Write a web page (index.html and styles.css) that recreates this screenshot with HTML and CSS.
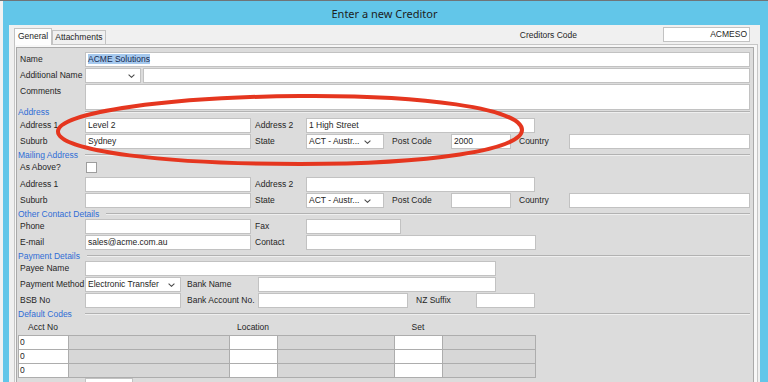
FILE: index.html
```html
<!DOCTYPE html>
<html lang="en">
<head>
    <meta charset="UTF-8">
    <meta name="viewport" content="width=device-width, initial-scale=1.0">
    <title>Enter a new Creditor</title>
    <link rel="stylesheet" href="styles.css">
</head>
<body>
    <div class="screen">
        <div class="behind"></div>
        <div class="window">
            <div class="titlebar">Enter a new Creditor</div>
            <div class="client">
                <div class="tabbar">
                    <div class="tabs">
                        <div class="tab active">General</div>
                        <div class="tab">Attachments</div>
                    </div>
                    <span class="code-label">Creditors Code</span>
                    <div class="field code">ACMESO</div>
                </div>

                <div class="tabpage">
                    <div class="panel">
                        <div class="row">
                            <span class="label">Name</span>
                            <div class="field wide"><span class="selected">ACME Solutions</span></div>
                        </div>
                        <div class="row">
                            <span class="label">Additional Name</span>
                            <div class="field combo extra"><span></span>
                                <svg class="chevron" viewBox="0 0 7 4"><path d="M0.6 0.6 L3.5 3.3 L6.4 0.6"/></svg>
                            </div>
                            <div class="field rest"></div>
                        </div>
                        <div class="row comments">
                            <span class="label">Comments</span>
                            <div class="field wide notes"></div>
                        </div>

                        <!-- Address -->
                        <div class="section address"><span>Address</span></div>
                        <div class="row">
                            <span class="label">Address 1</span>
                            <div class="field short">Level 2</div>
                            <span class="label2">Address 2</span>
                            <div class="field medium">1 High Street</div>
                        </div>
                        <div class="row">
                            <span class="label">Suburb</span>
                            <div class="field short">Sydney</div>
                            <span class="label2">State</span>
                            <div class="field combo state"><span>ACT - Austr...</span>
                                <svg class="chevron" viewBox="0 0 7 4"><path d="M0.6 0.6 L3.5 3.3 L6.4 0.6"/></svg>
                            </div>
                            <span class="label-post">Post Code</span>
                            <div class="field post">2000</div>
                            <span class="label-country">Country</span>
                            <div class="field country"></div>
                        </div>

                        <!-- Mailing Address -->
                        <div class="section"><span>Mailing Address</span></div>
                        <div class="row check-row">
                            <span class="label">As Above?</span>
                            <div class="checkbox"></div>
                        </div>
                        <div class="row">
                            <span class="label">Address 1</span>
                            <div class="field short"></div>
                            <span class="label2">Address 2</span>
                            <div class="field medium"></div>
                        </div>
                        <div class="row">
                            <span class="label">Suburb</span>
                            <div class="field short"></div>
                            <span class="label2">State</span>
                            <div class="field combo state"><span>ACT - Austr...</span>
                                <svg class="chevron" viewBox="0 0 7 4"><path d="M0.6 0.6 L3.5 3.3 L6.4 0.6"/></svg>
                            </div>
                            <span class="label-post">Post Code</span>
                            <div class="field post"></div>
                            <span class="label-country">Country</span>
                            <div class="field country"></div>
                        </div>

                        <!-- Other Contact Details -->
                        <div class="section"><span>Other Contact Details</span></div>
                        <div class="row">
                            <span class="label">Phone</span>
                            <div class="field short"></div>
                            <span class="label2">Fax</span>
                            <div class="field fax"></div>
                        </div>
                        <div class="row">
                            <span class="label">E-mail</span>
                            <div class="field short">sales@acme.com.au</div>
                            <span class="label2">Contact</span>
                            <div class="field contact"></div>
                        </div>

                        <!-- Payment Details -->
                        <div class="section"><span>Payment Details</span></div>
                        <div class="row">
                            <span class="label">Payee Name</span>
                            <div class="field payee"></div>
                        </div>
                        <div class="row">
                            <span class="label">Payment Method</span>
                            <div class="field combo method"><span>Electronic Transfer</span>
                                <svg class="chevron" viewBox="0 0 7 4"><path d="M0.6 0.6 L3.5 3.3 L6.4 0.6"/></svg>
                            </div>
                            <span class="label-bank">Bank Name</span>
                            <div class="field bank"></div>
                        </div>
                        <div class="row">
                            <span class="label">BSB No</span>
                            <div class="field bsb"></div>
                            <span class="label-bank">Bank Account No.</span>
                            <div class="field account"></div>
                            <span class="label-nz">NZ Suffix</span>
                            <div class="field suffix"></div>
                        </div>

                        <!-- Default Codes -->
                        <div class="section"><span>Default Codes</span></div>
                        <div class="codes">
                            <div class="codes-head">
                                <span>Acct No</span><span></span>
                                <span>Location</span><span></span>
                                <span>Set</span><span></span>
                            </div>
                            <div class="codes-row">
                                <span class="cell">0</span><span class="cell grey"></span>
                                <span class="cell"></span><span class="cell grey"></span>
                                <span class="cell"></span><span class="cell grey"></span>
                            </div>
                            <div class="codes-row">
                                <span class="cell">0</span><span class="cell grey"></span>
                                <span class="cell"></span><span class="cell grey"></span>
                                <span class="cell"></span><span class="cell grey"></span>
                            </div>
                            <div class="codes-row last">
                                <span class="cell">0</span><span class="cell grey"></span>
                                <span class="cell"></span><span class="cell grey"></span>
                                <span class="cell"></span><span class="cell grey"></span>
                            </div>
                        </div>
                        <div class="row">
                            <span class="label"></span>
                            <div class="field tiny"></div>
                        </div>

                        <!-- red hand-drawn ring around the street address -->
                        <svg class="annotation" viewBox="17 48 736 334" width="736" height="334">
                            <path d="M 58 131 C 60 112, 170 97, 300 96 C 420 95, 522 108, 522 130 C 522 150, 430 164, 300 164 C 170 164, 56 152, 58 131 Z"/>
                        </svg>
                    </div>
                </div>
            </div>
        </div>
    </div>
</body>
</html>
```

FILE: styles.css
```css
* {
    box-sizing: border-box;
}
html, body {
    margin: 0;
    padding: 0;
}
body {
    width: 768px;
    height: 382px;
    overflow: hidden;
    font-family: "Liberation Sans", Arial, sans-serif;
    font-size: 8.5px;
    color: #252525;
    background: #eef0f2;
}
.screen {
    display: flex;
    height: 382px;
    border-top: 1px solid #6f7478;
}
.behind {
    width: 3px;
    background: #f1f2f3;
}
.window {
    flex: 1;
    display: flex;
    flex-direction: column;
    min-height: 0;
    background: #62c6e9;
    padding: 0 8px 0 6px;
}
.titlebar {
    flex: none;
    height: 24px;
    display: flex;
    align-items: center;
    justify-content: center;
    font-family: "Noto Sans", "Open Sans", sans-serif;
    font-size: 11px;
    color: #1d1d1d;
}
.client {
    flex: 1;
    min-height: 0;
    overflow: hidden;
    display: flex;
    flex-direction: column;
    background: #f0f0f0;
}

/* tab strip + creditors code */
.tabbar {
    flex: none;
    height: 19px;
    display: flex;
    align-items: flex-end;
    padding: 0 10px 0 5px;
}
.tabs {
    flex: 1;
    display: flex;
    align-items: flex-end;
}
.tab {
    height: 14px;
    padding: 0 2px;
    line-height: 13px;
    border: 1px solid #c3c3c3;
    border-bottom: none;
    background: #f0f0f0;
}
.tab.active {
    height: 17px;
    padding: 0 3px;
    line-height: 15px;
    background: #fdfdfd;
    margin-bottom: -1px;
    position: relative;
    z-index: 1;
}
.code-label {
    align-self: center;
    margin-right: 86px;
}
.field.code {
    align-self: center;
    width: 87px;
    text-align: right;
}

.tabpage {
    flex: none;
    display: flex;
    flex-direction: column;
    margin: 0 2px 0 5px;
    padding: 2px 3px 0 1px;
    border: 1px solid #c6c6c6;
    border-bottom: none;
    background: #f7f7f7;
}
.panel {
    position: relative;
    padding: 4px 3px 0 1px;
    border: 1px solid #a9a9a9;
    border-bottom: none;
    background: #dcdcdc;
}

/* form rows */
.row {
    display: flex;
    align-items: flex-start;
    height: 16px;
}
.label {
    flex: none;
    width: 67px;
    padding-left: 2px;
    line-height: 15px;
    white-space: nowrap;
}
.label2, .label-post, .label-country, .label-bank, .label-nz {
    flex: none;
    line-height: 15px;
    white-space: nowrap;
}
.label2 { width: 55px; padding-left: 4px; }
.label-post { width: 67px; padding-left: 8px; }
.label-country { width: 58px; padding-left: 8px; }
.label-bank { width: 77px; padding-left: 6px; }
.label-nz { width: 68px; padding-left: 8px; }

.field {
    flex: none;
    height: 15px;
    padding: 0 2px;
    line-height: 13px;
    white-space: nowrap;
    overflow: hidden;
    background: #fff;
    border: 1px solid #c2c2c2;
}
.selected {
    background: #a6c9ee;
    color: #14284f;
}
.combo {
    display: flex;
    align-items: center;
    justify-content: space-between;
    padding-right: 5px;
}
.chevron {
    width: 7px;
    height: 4px;
    fill: none;
    stroke: #4a4a4a;
    stroke-width: 1.1;
}
.wide { width: 665px; }
.extra { width: 56px; }
.rest { width: 607px; margin-left: 2px; }
.comments { height: 26px; }
.notes { height: 26px; }
.short { width: 166px; }
.medium { width: 229px; }
.state { width: 78px; padding-right: 12px; }
.post { width: 60px; }
.country { width: 181px; }
.fax { width: 95px; }
.contact { width: 230px; }
.payee { width: 411px; }
.method { width: 96px; }
.bank { width: 238px; }
.bsb { width: 96px; }
.account { width: 150px; }
.suffix { width: 59px; }
.tiny { width: 48px; margin-top: 1px; }

.check-row { height: 17px; }
.checkbox {
    width: 11px;
    height: 11px;
    margin: 2px 0 0 1px;
    background: #fff;
    border: 1px solid #9d9d9d;
}

/* group captions */
.section {
    display: flex;
    align-items: center;
    height: 10px;
    color: #2f6dd6;
}
.section span {
    flex: none;
    min-width: 67px;
    padding-right: 7px;
    white-space: nowrap;
}
.section::after {
    content: "";
    flex: 1;
    border-top: 1px solid #b2b2b2;
    border-bottom: 1px solid #efefef;
}
.section.address {
    height: 12px;
    margin-top: -4px;
}

/* default codes grid */
.codes-head, .codes-row {
    display: grid;
    grid-template-columns: 50px 161px 48px 117px 48px 94px;
    width: 518px;
}
.codes-head {
    height: 16px;
    line-height: 16px;
    text-align: center;
}
.codes-row {
    height: 14px;
}
.cell {
    background: #fff;
    padding-left: 1px;
    line-height: 13px;
    border-top: 1px solid #adadad;
    border-left: 1px solid #adadad;
}
.cell.grey {
    background: #d7d7d7;
}
.codes-row .cell:last-child {
    border-right: 1px solid #adadad;
}
.codes-row.last .cell {
    height: 15px;
    border-bottom: 1px solid #adadad;
}

.annotation {
    position: absolute;
    left: 0;
    top: 0;
    pointer-events: none;
    fill: none;
    stroke: #e5361f;
    stroke-width: 4;
}
```
